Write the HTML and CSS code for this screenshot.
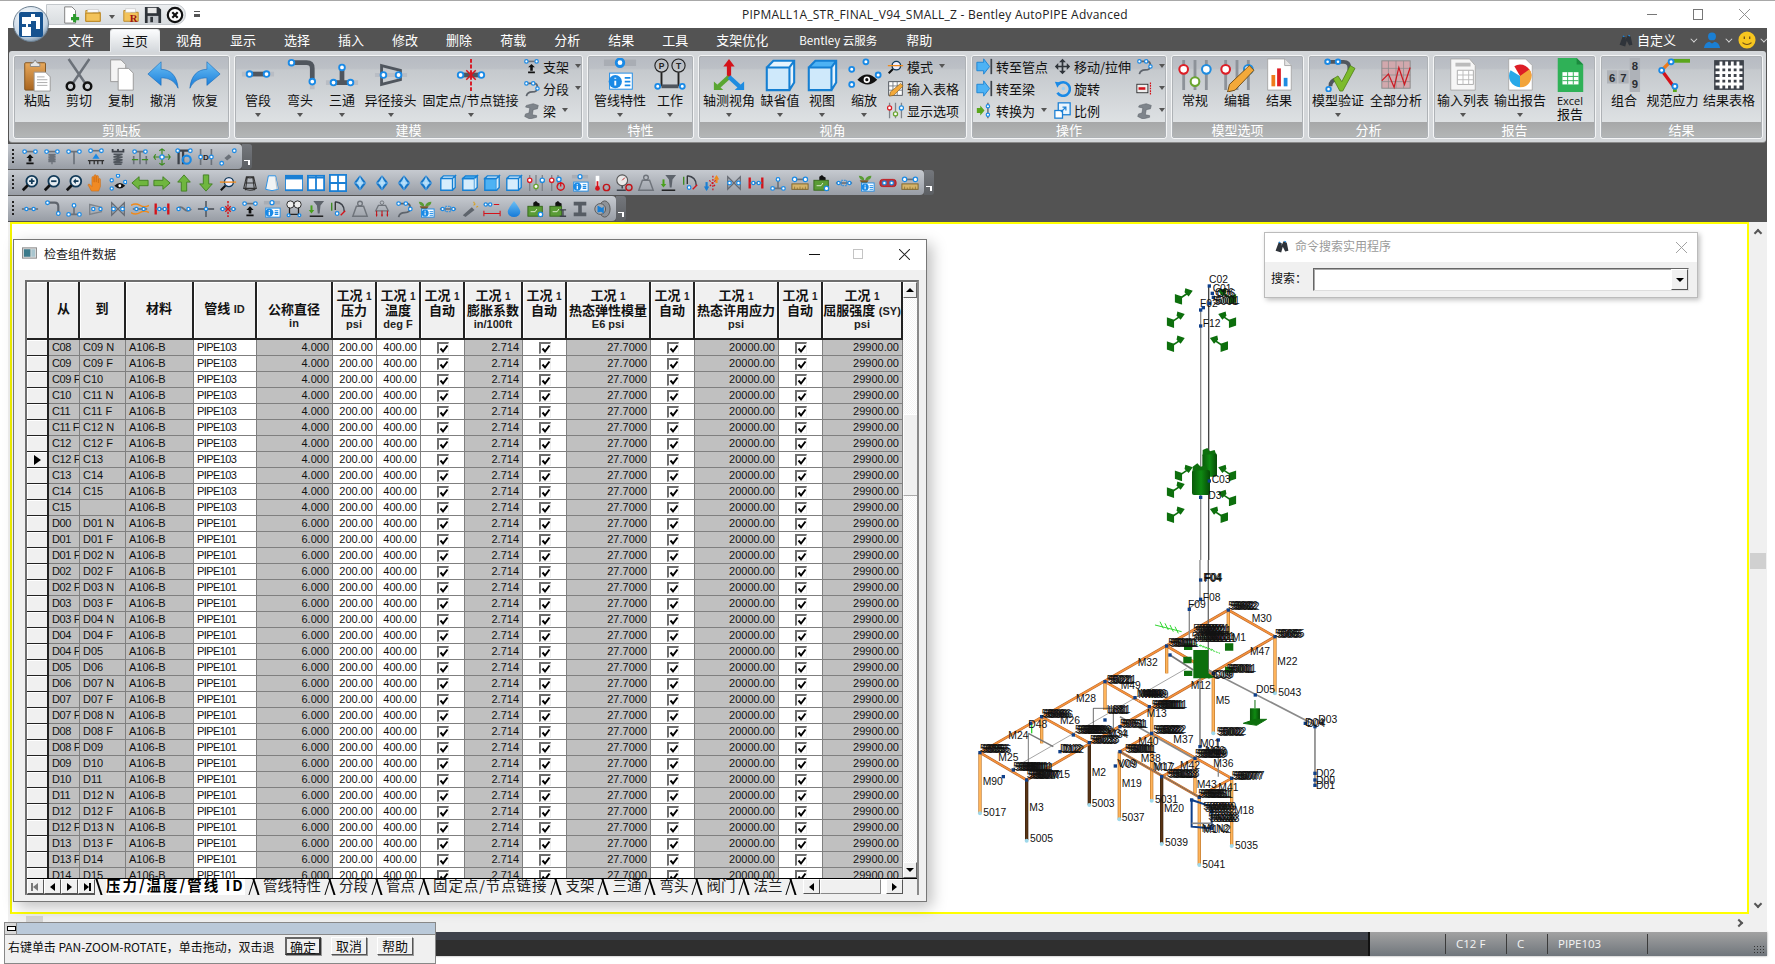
FILE: index.html
```html
<!DOCTYPE html>
<html lang="zh-CN">
<head>
<meta charset="utf-8">
<title>PIPMALL1A_STR_FINAL_V94_SMALL_Z - Bentley AutoPIPE Advanced</title>
<link rel="stylesheet" href="styles.css">
</head>
<body>
<svg class="defs" aria-hidden="true">
<defs>
<linearGradient id="gOrange" x1="0" x2="0" y1="0" y2="1"><stop offset="0" stop-color="#e8a95c"/><stop offset="1" stop-color="#a8641f"/></linearGradient>
<linearGradient id="gBlue" x1="0" x2="0" y1="0" y2="1"><stop offset="0" stop-color="#6cc0f5"/><stop offset="1" stop-color="#1479d8"/></linearGradient>
<linearGradient id="gCyl" x1="0" x2="1" y1="0" y2="0"><stop offset="0" stop-color="#0a5a0a"/><stop offset=".5" stop-color="#0f8a12"/><stop offset="1" stop-color="#064a06"/></linearGradient>
<radialGradient id="gApp" cx=".4" cy=".3" r=".8"><stop offset="0" stop-color="#fff"/><stop offset=".7" stop-color="#c3d4e4"/><stop offset="1" stop-color="#5d7890"/></radialGradient>
</defs>
<!-- ribbon, 36 units -->
<symbol id="paste" viewBox="0 0 36 36"><rect x="5" y="5" width="22" height="29" rx="1" fill="url(#gOrange)" stroke="#7d5220"/><path d="M11 6l3-1 2-3 2 3 3 1v3H11z" fill="#e6e6e6" stroke="#888"/><path d="M15 15h12l5 5v15H15z" fill="#fff" stroke="#999"/><path d="M18 20h8M18 23h11M18 26h11M18 29h11" stroke="#aaa"/></symbol>
<symbol id="cut" viewBox="0 0 36 36"><path d="M7 1l17 25M29 1L12 26" stroke="#6b7179" stroke-width="2.6" fill="none"/><circle cx="9" cy="30" r="4" fill="none" stroke="#111" stroke-width="2.6"/><circle cx="27" cy="30" r="4" fill="none" stroke="#111" stroke-width="2.6"/></symbol>
<symbol id="copy" viewBox="0 0 36 36"><path d="M7 2h11l5 5v18H7z" fill="#f4f4f4" stroke="#999"/><path d="M15 11h11l5 5v18H15z" fill="#fff" stroke="#999"/></symbol>
<symbol id="undo" viewBox="0 0 36 36"><path d="M2 17L16 4v8c10 0 17 7 18 20-4-8-10-11-18-11v8z" fill="url(#gBlue)" stroke="#1167b8" stroke-width=".6"/></symbol>
<symbol id="redo" viewBox="0 0 36 36"><path d="M34 17L20 4v8C10 12 3 19 2 32c4-8 10-11 18-11v8z" fill="url(#gBlue)" stroke="#1167b8" stroke-width=".6"/></symbol>
<symbol id="lpipe" viewBox="0 0 36 36"><path d="M1 17h34" stroke="#b9bdc4" stroke-width="5"/><path d="M9 17h18" stroke="#50565e" stroke-width="5"/><circle class="nl" cx="9" cy="17" r="3"/><circle class="nl" cx="27" cy="17" r="3"/></symbol>
<symbol id="lbend" viewBox="0 0 36 36"><path d="M2 5h6M31 24v9" stroke="#b9bdc4" stroke-width="5"/><path d="M8 5h17q6 0 6 6v14" stroke="#50565e" stroke-width="5" fill="none"/><circle class="nl" cx="9" cy="5" r="3"/><circle class="nl" cx="31" cy="25" r="3"/></symbol>
<symbol id="ltee" viewBox="0 0 36 36"><path d="M1 26h34M18 2v10" stroke="#b9bdc4" stroke-width="5"/><path d="M8 26h20M18 10v16" stroke="#50565e" stroke-width="5"/><circle class="nl" cx="18" cy="10" r="3"/><circle class="nl" cx="9" cy="26" r="3"/><circle class="nl" cx="27" cy="26" r="3"/></symbol>
<symbol id="lred" viewBox="0 0 36 36"><path d="M1 18h34" stroke="#b9bdc4" stroke-width="4"/><path d="M8 8l20 5v10L8 28z" fill="none" stroke="#50565e" stroke-width="3"/><circle class="nl" cx="10" cy="18" r="3"/><circle class="nl" cx="26" cy="18" r="3"/></symbol>
<symbol id="lanch" viewBox="0 0 36 36"><path d="M6 18h24" stroke="#50565e" stroke-width="5"/><path d="M18 1v34" stroke="#d8141e" stroke-width="2" stroke-dasharray="4 2"/><path d="M13 13l10 10M23 13L13 23" stroke="#d8141e" stroke-width="1.6"/><circle class="nl" cx="7" cy="18" r="3"/><circle class="nl" cx="29" cy="18" r="3"/></symbol>
<symbol id="lprop" viewBox="0 0 36 36"><path d="M1 5h34" stroke="#a9adb4" stroke-width="7"/><circle cx="18" cy="5" r="4" fill="#fff" stroke="#1a8ae6" stroke-width="3"/><rect x="7" y="16" width="24" height="17" fill="#fff" stroke="#1a8ae6"/><circle cx="13" cy="25" r="7" fill="#1a8ae6"/><path d="M13 21v1M13 24v5" stroke="#fff" stroke-width="2"/><path d="M23 21h6M23 25h6M23 29h6" stroke="#1a8ae6" stroke-width="2"/></symbol>
<symbol id="lpt" viewBox="0 0 36 36"><path d="M9 15v15M27 15v15" stroke="#222" stroke-width="2"/><path d="M9 30h18" stroke="#50565e" stroke-width="4"/><circle cx="9" cy="8" r="7" fill="none" stroke="#222" stroke-width="1.2"/><circle cx="27" cy="8" r="7" fill="none" stroke="#222" stroke-width="1.2"/><text x="9" y="12" class="svt" text-anchor="middle">P</text><text x="27" y="12" class="svt" text-anchor="middle">T</text><circle class="nl" cx="5" cy="30" r="2.6"/><circle class="nl" cx="31" cy="30" r="2.6"/></symbol>
<symbol id="laxes" viewBox="0 0 36 36"><path d="M18 20V7" stroke="#d4121a" stroke-width="4.5"/><path d="M12 9l6-8 6 8z" fill="#d4121a"/><path d="M18 20L7 30" stroke="#5aa632" stroke-width="4.5"/><path d="M2 25v9h10z" fill="#5aa632"/><path d="M18 20l11 10" stroke="#1f8ce0" stroke-width="4.5"/><path d="M34 25v9H24z" fill="#1f8ce0"/></symbol>
<symbol id="lcube" viewBox="0 0 36 36"><path d="M4 10h24v24H4z" fill="#cfe9fb"/><path d="M4 10l7-7h22l-5 7z" fill="#e7f4fd"/><path d="M28 10l5-7v23l-5 8z" fill="#e7f4fd"/><path d="M4 10h24v24H4zM4 10l7-7h22v23l-5 8M28 10l5-7" fill="none" stroke="#157fd2" stroke-width="2.2"/></symbol>
<symbol id="lcubeb" viewBox="0 0 36 36"><path d="M4 10h24v24H4z" fill="#cfe9fb"/><path d="M4 10l7-7h22l-5 7z" fill="#4db2f4"/><path d="M28 10l5-7v23l-5 8z" fill="#e7f4fd"/><path d="M4 10h24v24H4zM4 10l7-7h22v23l-5 8M28 10l5-7" fill="none" stroke="#157fd2" stroke-width="2.2"/></symbol>
<symbol id="leye" viewBox="0 0 36 36"><circle class="nl" cx="5" cy="12" r="2.6"/><circle class="nl" cx="20" cy="4" r="2.6"/><circle class="nl" cx="5" cy="28" r="2.6"/><circle class="nl" cx="33" cy="18" r="2.6"/><path d="M11 23q10-11 21 0-10 10-21 0z" fill="#111"/><circle cx="21" cy="23" r="3.4" fill="#fff"/><circle cx="21" cy="23" r="1.7" fill="#111"/></symbol>
<symbol id="lslid" viewBox="0 0 36 36"><path d="M6 2v32M18 2v32M30 2v32" stroke="#8d9299" stroke-width="3"/><circle cx="6" cy="12" r="4.6" fill="#fff" stroke="#dd1e26" stroke-width="2.2"/><circle cx="18" cy="25" r="4.6" fill="#fff" stroke="#6aa52f" stroke-width="2.2"/><circle cx="30" cy="12" r="4.6" fill="#fff" stroke="#1f8ce0" stroke-width="2.2"/></symbol>
<symbol id="ledit" viewBox="0 0 36 36"><path d="M6 2v32M18 2v32M30 2v32" stroke="#8d9299" stroke-width="3"/><circle cx="6" cy="12" r="4.6" fill="#fff" stroke="#dd1e26" stroke-width="2.2"/><circle cx="30" cy="12" r="4.6" fill="#fff" stroke="#1f8ce0" stroke-width="2.2"/><path d="M31 8l5 5-20 21-8 2 2-8z" fill="#f3a93a" stroke="#6b4a16"/></symbol>
<symbol id="ldocb" viewBox="0 0 36 36"><path d="M6 1h18l7 7v26H6z" fill="#fff" stroke="#a8a8a8"/><path d="M24 1v7h7" fill="#e4e4e4" stroke="#a8a8a8"/><path d="M10 18h4v12h-4z" fill="#ef7b1c"/><path d="M16 11h4v19h-4z" fill="#dd1e26"/><path d="M23 21h4v9h-4z" fill="#1f8ce0"/></symbol>
<symbol id="lverify" viewBox="0 0 36 36"><path d="M4 4h20q6 0 6 6v3M10 30q0-7 7-7" stroke="#50565e" stroke-width="4" fill="none"/><circle class="nl" cx="7" cy="4" r="2.4"/><circle class="nl" cx="18" cy="4" r="2.4"/><circle class="nl" cx="8" cy="33" r="2.4"/><path d="M13 22l5-3 4 6 9-17 5 3-13 24h-3z" fill="#7dbb2c" stroke="#4a7c12" stroke-width=".8"/></symbol>
<symbol id="lchart" viewBox="0 0 36 36"><rect x="3" y="3" width="30" height="29" fill="#d2a8ad" stroke="#8b8b8b"/><path d="M3 11h30M3 18h30M3 25h30M10 3v29M18 3v29M26 3v29" stroke="#8b8b8b" stroke-width=".8"/><path d="M3 24l7-7 6 14 5-21 6 18 6-18" fill="none" stroke="#cb1a22" stroke-width="1.3"/></symbol>
<symbol id="ldoct" viewBox="0 0 36 36"><path d="M5 1h20l6 7v26H5z" fill="#f6f6f6" stroke="#aaa"/><path d="M10 5h16v4H10z" fill="#bbb"/><path d="M12 13h17v15H12z" fill="#fff" stroke="#aaa"/><path d="M12 18h17M12 23h17M18 13v15M24 13v15" stroke="#bbb"/></symbol>
<symbol id="ldocp" viewBox="0 0 36 36"><path d="M6 1h18l7 7v26H6z" fill="#fff" stroke="#aaa"/><path d="M18 19V7a12 12 0 0 1 10.600 17.700z" fill="#dd1e26" transform="rotate(-30 18 19)"/><path d="M18 19l10-7a12 12 0 0 1-10 19z" fill="#f2a43a"/><path d="M18 19v12a12 12 0 0 1-10-18z" fill="#28a8e8"/></symbol>
<symbol id="lxl" viewBox="0 0 36 36"><path d="M5 0h20l7 7v29H5z" fill="#2fb157"/><path d="M25 0v7h7z" fill="#1b8a3e"/><path d="M10 15h17v13H10z" fill="#fff"/><path d="M10 19.500h17M10 24h17M15.500 15v13M21.500 15v13" stroke="#2fb157"/></symbol>
<symbol id="lcombo" viewBox="0 0 36 36"><path d="M0 13h11v14H0zM12 13h11v14H12zM24 0h11v18H24zM24 18h11v18H24z" fill="#aeb2b8"/><text x="5.500" y="25" class="sn" text-anchor="middle">6</text><text x="17.500" y="25" class="sn" text-anchor="middle">7</text><text x="29.500" y="13" class="sn" text-anchor="middle">8</text><text x="29.500" y="32" class="sn" text-anchor="middle">9</text></symbol>
<symbol id="lcode" viewBox="0 0 36 36"><path d="M16 3h20" stroke="#5aa61c" stroke-width="4"/><path d="M6 13L16 3" stroke="#ef7b1c" stroke-width="3.5"/><path d="M6 13l14 19" stroke="#d4121a" stroke-width="3.5"/><path d="M20 30v6" stroke="#5aa61c" stroke-width="4"/><circle class="nl" cx="6" cy="13" r="2.6"/><circle class="nl" cx="16" cy="4" r="2.6"/><circle class="nl" cx="20" cy="30" r="2.6"/></symbol>
<symbol id="lgrid" viewBox="0 0 36 36"><rect x="3" y="3" width="30" height="30" fill="#3d424a"/><path d="M9.500 3v30M15.500 3v30M21.500 3v30M27.500 3v30M3 9.500h30M3 15.500h30M3 21.500h30M3 27.500h30" stroke="#fff" stroke-width="3"/><rect x="3" y="3" width="30" height="30" fill="none" stroke="#3d424a" stroke-width="1.500"/></symbol>
<!-- small, 20 units -->
<symbol id="hang" viewBox="0 0 20 20"><path class="g" d="M4 4h12"/><circle class="nd" cx="4" cy="4" r="2"/><circle class="nd" cx="16" cy="4" r="2"/><path fill="#111" d="M10 7l4 4h-2.500v4h-3v-4H6zM6 16h8v2H6z"/></symbol>
<symbol id="spring" viewBox="0 0 20 20"><path class="g" d="M4 4h12"/><circle class="nd" cx="4" cy="4" r="2"/><circle class="nd" cx="16" cy="4" r="2"/><path fill="none" stroke="#6b7179" stroke-width="1.500" d="M6 7h8l-8 2h8l-8 2h8l-8 2h8l-8 2h8M10 15v3"/></symbol>
<symbol id="rod" viewBox="0 0 20 20"><path class="g" d="M4 4h12M10 5v13"/><circle class="nd" cx="4" cy="4" r="2"/><circle class="nd" cx="16" cy="4" r="2"/></symbol>
<symbol id="tri" viewBox="0 0 20 20"><path class="g" d="M4 3h12"/><circle class="nd" cx="4" cy="3" r="2"/><circle class="nd" cx="16" cy="3" r="2"/><path fill="#1a8ae6" d="M10 6l4 6H6z"/><path stroke="#333" stroke-width="1.500" fill="none" d="M1 14h18M3 14v4M8 14v4M12 14v4M17 14v4"/></symbol>
<symbol id="comb" viewBox="0 0 20 20"><path stroke="#3d424a" stroke-width="2" fill="none" d="M3 4h14M4 1v3M10 1v3M16 1v3"/><path stroke="#4f555c" stroke-width="1.800" fill="none" d="M5 7h10L5 10h10L5 13h10L5 16h10M6 18h8"/></symbol>
<symbol id="gt" viewBox="0 0 20 20"><path class="g" d="M4 4h12M10 4v14M3 9v9M17 9v9"/><circle class="nd" cx="4" cy="4" r="2"/><circle class="nd" cx="16" cy="4" r="2"/><path stroke="#3c8a1e" stroke-width="1.400" d="M1 13h7M12 13h7"/></symbol>
<symbol id="gx" viewBox="0 0 20 20"><path stroke="#3c8a1e" stroke-width="1.300" d="M10 1v18M1 10h18M7 3l3-2 3 2M7 17l3 2 3-2M3 7l-2 3 2 3M17 7l2 3-2 3" fill="none"/><circle class="nd" cx="10" cy="10" r="2.400"/></symbol>
<symbol id="pcurve" viewBox="0 0 20 20"><path stroke="#3d424a" stroke-width="2.500" fill="none" d="M3 3h14M4 3v15M9 3v15"/><circle cx="13" cy="13" r="4.500" fill="none" stroke="#1a8ae6" stroke-width="2.400"/><circle class="nd" cx="3" cy="3" r="2"/><circle class="nd" cx="17" cy="3" r="2"/></symbol>
<symbol id="dd" viewBox="0 0 20 20"><path class="g" d="M4 1v18M16 1v18"/><circle class="nd" cx="4" cy="10" r="2"/><circle class="nd" cx="16" cy="10" r="2"/><text x="10" y="13" class="svt" text-anchor="middle">D</text></symbol>
<symbol id="diag" viewBox="0 0 20 20"><circle class="nd" cx="3" cy="17" r="2"/><circle class="nd" cx="17" cy="3" r="2"/><path d="M6 11l5-4 3 3-5 4z" fill="#6b7179"/></symbol>
<symbol id="zin" viewBox="0 0 20 20"><circle cx="12" cy="8" r="6" fill="#e6edf2" stroke="#123a58" stroke-width="2"/><path d="M7.500 12.500L2 18" stroke="#111" stroke-width="3"/><path d="M9 8h6M12 5v6" stroke="#123a58" stroke-width="2"/></symbol>
<symbol id="zout" viewBox="0 0 20 20"><circle cx="12" cy="8" r="6" fill="#e6edf2" stroke="#123a58" stroke-width="2"/><path d="M7.500 12.500L2 18" stroke="#111" stroke-width="3"/><path d="M9 8h6" stroke="#123a58" stroke-width="2"/></symbol>
<symbol id="zprev" viewBox="0 0 20 20"><circle cx="12" cy="8" r="6" fill="#e6edf2" stroke="#123a58" stroke-width="2"/><path d="M7.500 12.500L2 18" stroke="#111" stroke-width="3"/><path d="M9 8l3-3v2h3v2h-3v2z" fill="#123a58"/></symbol>
<symbol id="hand" viewBox="0 0 20 20"><path fill="#f08a24" stroke="#c96a12" stroke-width=".6" d="M5 19l-4-7 1.500-1 3 3V4a1.200 1.200 0 0 1 2.400 0v5V2a1.200 1.200 0 0 1 2.400 0v7V3a1.200 1.200 0 0 1 2.400 0v7V6a1.100 1.100 0 0 1 2.200 0v8l-2 5z"/></symbol>
<symbol id="eye" viewBox="0 0 20 20"><circle class="nd" cx="3" cy="7" r="1.800"/><circle class="nd" cx="10" cy="2" r="1.800"/><circle class="nd" cx="3" cy="16" r="1.800"/><circle class="nd" cx="18" cy="9" r="1.800"/><path d="M6 13q6-6 12 0-6 6-12 0z" fill="#111"/><circle cx="12" cy="13" r="1.600" fill="#fff"/></symbol>
<symbol id="al" viewBox="0 0 20 20"><path class="ar" d="M1 10l8-7v4h10v6H9v4z"/></symbol>
<symbol id="ar" viewBox="0 0 20 20"><path class="ar" d="M19 10l-8-7v4H1v6h10v4z"/></symbol>
<symbol id="au" viewBox="0 0 20 20"><path class="ar" d="M10 1l7 8h-4v10H7V9H3z"/></symbol>
<symbol id="ad" viewBox="0 0 20 20"><path class="ar" d="M10 19l7-8h-4V1H7v10H3z"/></symbol>
<symbol id="lens" viewBox="0 0 20 20"><circle cx="11" cy="9" r="5" fill="#eef" stroke="#123a58" stroke-width="1.600"/><path d="M7 13l-5 5" stroke="#111" stroke-width="2.400"/><path d="M1 9h18" stroke="#ef8a1c" stroke-width="1.500"/></symbol>
<symbol id="wire" viewBox="0 0 20 20"><path fill="none" stroke="#333" stroke-width="1.200" d="M6 3h8l3 13H3zM6 3q4 3 8 0M3 16q7 4 14 0M7 3L5 18M13 3l2 15M4 10h12"/></symbol>
<symbol id="cone" viewBox="0 0 20 20"><path d="M6 2h8l3 15q-7 3-14 0z" fill="#f1f3f4" stroke="#1a8ae6" stroke-width="1"/><path d="M13 3l2 14 2 0-3-14z" fill="#c2c6cb"/></symbol>
<symbol id="w1" viewBox="0 0 20 20"><rect x="0" y="2" width="20" height="16" fill="#fff" stroke="#1a7fd4" stroke-width="2"/><rect x="0" y="2" width="20" height="4" fill="#1a7fd4"/></symbol>
<symbol id="w2" viewBox="0 0 20 20"><rect x="1" y="2" width="18" height="16" fill="#fff" stroke="#1a7fd4" stroke-width="2"/><path d="M1 4h18M10 2v16" stroke="#1a7fd4" stroke-width="2"/></symbol>
<symbol id="w4" viewBox="0 0 20 20"><rect x="1" y="1" width="18" height="18" fill="#fff" stroke="#1a7fd4" stroke-width="2"/><path d="M1 10h18M10 1v18" stroke="#1a7fd4" stroke-width="2"/></symbol>
<symbol id="gem" viewBox="0 0 20 20"><path d="M10 1l7 9-7 9-7-9z" fill="#1576c8"/><path d="M10 4l4 6-4 5-4-5z" fill="#9ed4f8"/><path d="M10 1v18M3 10h14" stroke="#e8f5ff" stroke-width=".5"/></symbol>
<symbol id="c1" viewBox="0 0 20 20"><path d="M2 5h13v13H2zM2 5l3-3h13l-3 3M15 5l3-3v13l-3 3" fill="#d6edfc" stroke="#157fd2" stroke-width="1.500"/></symbol>
<symbol id="c2" viewBox="0 0 20 20"><path d="M2 5h13v13H2z" fill="#d6edfc" stroke="#157fd2" stroke-width="1.500"/><path d="M2 5l3-3h13l-3 3z" fill="#4db2f4" stroke="#157fd2" stroke-width="1.500"/><path d="M15 5l3-3v13l-3 3" fill="#d6edfc" stroke="#157fd2" stroke-width="1.500"/></symbol>
<symbol id="c3" viewBox="0 0 20 20"><path d="M2 5h13v13H2z" fill="#4db2f4" stroke="#157fd2" stroke-width="1.500"/><path d="M2 5l3-3h13l-3 3zM15 5l3-3v13l-3 3" fill="#d6edfc" stroke="#157fd2" stroke-width="1.500"/></symbol>
<symbol id="slid" viewBox="0 0 20 20"><path d="M3 1v18M10 1v18M17 1v18" stroke="#7f848b" stroke-width="1.500"/><circle cx="3" cy="7" r="2.400" fill="#fff" stroke="#dd1e26" stroke-width="1.500"/><circle cx="10" cy="14" r="2.400" fill="#fff" stroke="#6aa52f" stroke-width="1.500"/><circle cx="17" cy="7" r="2.400" fill="#fff" stroke="#1f8ce0" stroke-width="1.500"/></symbol>
<symbol id="slidp" viewBox="0 0 20 20"><path d="M3 1v18M10 1v12" stroke="#7f848b" stroke-width="1.500"/><circle cx="3" cy="7" r="2.400" fill="#fff" stroke="#dd1e26" stroke-width="1.500"/><circle cx="11" cy="6" r="2.400" fill="#fff" stroke="#1f8ce0" stroke-width="1.500"/><circle cx="13" cy="14" r="4" fill="none" stroke="#d4121a" stroke-width="1.500"/><path d="M13 9v5" stroke="#d4121a" stroke-width="1.500"/></symbol>
<symbol id="info" viewBox="0 0 20 20"><path d="M1 3h18" stroke="#a9adb4" stroke-width="4"/><circle class="nd" cx="10" cy="3" r="2.200"/><rect x="3" y="9" width="16" height="10" fill="#fff" stroke="#1a8ae6"/><circle cx="7" cy="14" r="4.600" fill="#1a8ae6"/><path d="M7 11v1M7 13v4" stroke="#fff" stroke-width="1.400"/><path d="M13 12h4M13 14h4M13 16h4" stroke="#1a8ae6" stroke-width="1.200"/></symbol>
<symbol id="therm" viewBox="0 0 20 20"><path d="M5 2v11" stroke="#fff" stroke-width="4"/><path d="M5 8v8" stroke="#d4121a" stroke-width="2"/><circle cx="5" cy="16" r="2.600" fill="#d4121a"/><circle cx="15" cy="15" r="3.500" fill="none" stroke="#c21419" stroke-width="1.600"/></symbol>
<symbol id="gauge" viewBox="0 0 20 20"><circle cx="8" cy="7" r="6" fill="#e8e8e8" stroke="#555" stroke-width="1.200"/><path d="M8 7l3-3" stroke="#c21419"/><path d="M8 13v3M2 18h10" stroke="#3d424a" stroke-width="1.600"/><circle cx="15.500" cy="15" r="3.400" fill="none" stroke="#c21419" stroke-width="1.600"/></symbol>
<symbol id="wt" viewBox="0 0 20 20"><path d="M6 7h8l4 11H2z" fill="none" stroke="#6f747b" stroke-width="1.600"/><circle cx="10" cy="4" r="2.600" fill="none" stroke="#6f747b" stroke-width="1.500"/></symbol>
<symbol id="wta" viewBox="0 0 20 20"><path d="M6 6h8l3 6H3z" fill="none" stroke="#6f747b" stroke-width="1.400"/><circle cx="10" cy="3" r="2" fill="none" stroke="#6f747b"/><path d="M4 12v6M10 12v6M16 12v6" stroke="#c21419" stroke-width="1.200"/><path d="M3 16l1 3 1-3M9 16l1 3 1-3M15 16l1 3 1-3" fill="#c21419"/></symbol>
<symbol id="force" viewBox="0 0 20 20"><path d="M7 1h12l-4 5-1 9h-2l-1-9z" fill="#5e646c"/><path d="M5 6v7" stroke="#49a01c" stroke-width="2.200"/><path d="M2 11h6l-3 4z" fill="#49a01c"/><path d="M3 18h15" stroke="#111" stroke-width="1.500"/></symbol>
<symbol id="dial" viewBox="0 0 20 20"><path d="M7 2q10 1 10 11" fill="none" stroke="#3d424a" stroke-width="1.600"/><path d="M3 3v9" stroke="#3c8a1e" stroke-width="1.500"/><path d="M7 2v9" stroke="#333" stroke-width="1.500"/><circle class="nd" cx="9" cy="15" r="2"/><path d="M13 17l5-5" stroke="#d4121a" stroke-width="1.500"/></symbol>
<symbol id="rb" viewBox="0 0 20 20"><path d="M4 9v8" stroke="#1a7fd4" stroke-width="2.400"/><path d="M1 14h6l-3 5z" fill="#1a7fd4"/><path d="M15 3v7" stroke="#ef8a1c" stroke-width="2.400"/><path d="M12 6h6l-3-5z" fill="#ef8a1c"/><path d="M11 2v17M7 7l7 7M14 7l-7 7" stroke="#d4121a" stroke-dasharray="2 1.500" stroke-width="1.300"/></symbol>
<symbol id="valve" viewBox="0 0 20 20"><path d="M3 3l14 14V3L3 17z" fill="none" stroke="#666b73" stroke-width="1.400"/><circle class="nd" cx="5" cy="10" r="2"/><circle class="nd" cx="15" cy="10" r="2"/></symbol>
<symbol id="fl" viewBox="0 0 20 20"><path d="M3 4v12M17 4v12" stroke="#d4121a" stroke-width="2.600"/><path class="g" d="M3 10h14" stroke-width="1.400"/><circle class="nd" cx="7" cy="10" r="1.800"/><circle class="nd" cx="13" cy="10" r="1.800"/></symbol>
<symbol id="tee" viewBox="0 0 20 20"><path class="g" d="M10 4v12M3 16h14"/><circle class="nd" cx="10" cy="6" r="2"/><circle class="nd" cx="4" cy="16" r="2"/><circle class="nd" cx="16" cy="16" r="2"/></symbol>
<symbol id="rule" viewBox="0 0 20 20"><path class="g" d="M4 6h12"/><circle class="nd" cx="4" cy="6" r="2.400"/><circle class="nd" cx="16" cy="6" r="2.400"/><rect x="1" y="11" width="18" height="6" fill="#d4b36a" stroke="#7b6226"/><path d="M4 14v3M7 15v2M10 14v3M13 15v2M16 14v3" stroke="#7b6226" stroke-width=".7"/></symbol>
<symbol id="mach" viewBox="0 0 20 20"><path d="M7 7V3l3-2 2 2 2 1v3z" fill="#111"/><rect x="1" y="7" width="16" height="11" fill="#5a9c35" stroke="#34661a"/><path d="M4 13h5l2-3" stroke="#e5f2d8" fill="none"/><circle class="nd" cx="15" cy="16" r="2.400"/></symbol>
<symbol id="mach2" viewBox="0 0 20 20"><path d="M7 7V3l3-2 2 2 2 1v3z" fill="#111"/><rect x="1" y="7" width="13" height="11" fill="#5a9c35" stroke="#34661a"/><path d="M4 13h5l2-3" stroke="#e5f2d8" fill="none"/><path d="M12 11h7M12 18h7M15.500 11v7" stroke="#3d424a" stroke-width="1.500"/></symbol>
<symbol id="joint" viewBox="0 0 20 20"><path class="g" d="M1 10h18" stroke-width="1.200"/><rect x="7" y="7" width="6" height="6" fill="none" stroke="#1a8ae6" stroke-dasharray="2 1"/><circle class="nd" cx="4" cy="10" r="1.800"/><circle class="nd" cx="16" cy="10" r="1.800"/></symbol>
<symbol id="plant" viewBox="0 0 20 20"><path d="M8 7q-5 0-6-5 6 0 6 5zM9 7q1-5 7-5 0 5-7 5z" fill="#5a9c35"/><path d="M3 7h10l-2 3H5z" fill="#7a5a2a"/><rect x="5" y="10" width="14" height="9" fill="#fff" stroke="#1a8ae6"/><circle cx="9" cy="14.500" r="4" fill="#1a8ae6"/><path d="M9 12v1M9 14v3" stroke="#fff" stroke-width="1.200"/><path d="M14 13h4M14 15h4M14 17h4" stroke="#1a8ae6"/></symbol>
<symbol id="chain" viewBox="0 0 20 20"><rect x="1" y="6" width="18" height="8" rx="3" fill="#a83a48" stroke="#c21419"/><circle class="nd" cx="6" cy="10" r="2"/><circle class="nd" cx="14" cy="10" r="2"/></symbol>
<symbol id="pipe" viewBox="0 0 20 20"><path class="g" d="M1 10h18" stroke="#9aa0a7" stroke-width="2"/><circle class="nd" cx="6" cy="10" r="1.800"/><circle class="nd" cx="14" cy="10" r="1.800"/></symbol>
<symbol id="bend" viewBox="0 0 20 20"><path d="M3 3h10q4 0 4 4v10" stroke="#5e646c" stroke-width="2.400" fill="none"/><circle class="nd" cx="5" cy="3" r="2"/><circle class="nd" cx="17" cy="15" r="2"/></symbol>
<symbol id="redu" viewBox="0 0 20 20"><path d="M3 5l13 3v5L3 16z" fill="none" stroke="#7d838a" stroke-width="1.500"/><circle class="nd" cx="7" cy="10" r="1.800"/><circle class="nd" cx="15" cy="10" r="1.800"/></symbol>
<symbol id="flex" viewBox="0 0 20 20"><path d="M0 6q5-3 10 0t10 0M0 14q5 3 10 0t10 0" fill="none" stroke="#ef8a1c" stroke-width="1.500"/><path class="g" d="M2 10h16" stroke-width="1.500"/><circle class="nd" cx="6" cy="10" r="1.800"/><circle class="nd" cx="14" cy="10" r="1.800"/></symbol>
<symbol id="wave" viewBox="0 0 20 20"><path d="M2 10q4-4 8 0t8 0" fill="none" stroke="#6b7179" stroke-width="2"/><circle class="nd" cx="4" cy="10" r="1.800"/><circle class="nd" cx="15" cy="10" r="1.800"/></symbol>
<symbol id="cross" viewBox="0 0 20 20"><path d="M1 10h18M10 1v18" stroke="#5e646c" stroke-width="2"/><circle class="nd" cx="10" cy="10" r="1.800"/></symbol>
<symbol id="anch" viewBox="0 0 20 20"><path class="g" d="M1 10h18" stroke-width="1.200"/><path d="M10 1v18" stroke="#d4121a" stroke-width="1.600" stroke-dasharray="2.500 1.500"/><path d="M7 7l6 6M13 7l-6 6" stroke="#d4121a" stroke-width="1.400"/><circle class="nd" cx="4" cy="10" r="1.800"/><circle class="nd" cx="16" cy="10" r="1.800"/></symbol>
<symbol id="pt" viewBox="0 0 20 20"><path d="M5 8v8M15 8v8M5 16h10" stroke="#222" stroke-width="1.400"/><circle cx="6" cy="5" r="4" fill="#eee" stroke="#222"/><circle cx="14" cy="5" r="4" fill="#eee" stroke="#222"/><circle class="nd" cx="4" cy="17" r="1.600"/><circle class="nd" cx="16" cy="17" r="1.600"/></symbol>
<symbol id="curve" viewBox="0 0 20 20"><path d="M3 4h10q4 0 4 5t-6 5q-6 0-7 5" fill="none" stroke="#5e646c" stroke-width="2"/><circle class="nd" cx="4" cy="4" r="2"/><circle class="nd" cx="12" cy="4" r="2"/><circle class="nd" cx="17" cy="10" r="2"/></symbol>
<symbol id="torch" viewBox="0 0 20 20"><path d="M2 17L12 8l3 3-10 8z" fill="#5e646c"/><path d="M14 6l2-2M17 8l2-1M14 2l1 2" stroke="#d8a020" stroke-width="1.200"/></symbol>
<symbol id="dist" viewBox="0 0 20 20"><path class="g" d="M1 5h9" stroke-width="1.200"/><circle class="nd" cx="3" cy="5" r="1.800"/><circle class="nd" cx="8" cy="5" r="1.800"/><path d="M12 5h6M1 15h18M1 12v6M19 12v6" stroke="#d4121a" stroke-width="1.200"/></symbol>
<symbol id="drop" viewBox="0 0 20 20"><path d="M10 1q7 9 7 12a7 6 0 0 1-14 0q0-3 7-12z" fill="url(#gBlue)"/></symbol>
<symbol id="ibeam" viewBox="0 0 20 20"><path d="M3 2h14v4h-5v8h5v4H3v-4h5V6H3z" fill="#565c64"/></symbol>
<symbol id="spk" viewBox="0 0 20 20"><ellipse cx="13" cy="10" rx="6" ry="9" fill="#8e9298" stroke="#555"/><circle cx="8" cy="10" r="6" fill="#a6aab0" stroke="#555"/><path d="M5 6l5 3 2-2v8l-3-2-4 1z" fill="#1a7fd4"/></symbol>
<symbol id="gonode" viewBox="0 0 20 20"><path d="M1 5h8V1l7 9-7 9v-4H1z" fill="#4db2f4" stroke="#157fd2"/><path d="M18 1v18" stroke="#3d424a" stroke-width="2"/></symbol>
<symbol id="move" viewBox="0 0 20 20"><path fill="#2f343a" d="M10 1l4 4h-3v4h4V6l4 4-4 4v-3h-4v4h3l-4 4-4-4h3v-4H5v3l-4-4 4-4v3h4V5H6z"/></symbol>
<symbol id="rot" viewBox="0 0 20 20"><path d="M5 5a8 8 0 1 1-1 10" fill="none" stroke="#1a8ae6" stroke-width="3"/><path d="M1 2l7 1-4 6z" fill="#1a8ae6"/><circle cx="11" cy="10" r="2" fill="#9bd1f5"/></symbol>
<symbol id="scale" viewBox="0 0 20 20"><rect x="5" y="1" width="14" height="14" fill="#eaf5fd" stroke="#1a7fd4" stroke-width="1.500"/><rect x="1" y="10" width="9" height="9" fill="#fff" stroke="#1a7fd4" stroke-width="1.500"/><path d="M8 12l6-6M10 6h4v4" stroke="#1a7fd4" stroke-width="1.400" fill="none"/></symbol>
<symbol id="conv" viewBox="0 0 20 20"><path d="M1 7h4V4l5 6-5 6v-3H1z" fill="#5aa61c"/><path class="g" d="M14 1v18" stroke-width="1.600"/><circle class="nd" cx="14" cy="5" r="2"/><circle class="nd" cx="14" cy="15" r="2"/></symbol>
<symbol id="tedit" viewBox="0 0 20 20"><rect x="2" y="2" width="16" height="16" fill="#fff" stroke="#3d424a"/><path d="M2 7h16M2 12h16M7 2v16M12 2v16" stroke="#6b7179"/><path d="M16 4l3 3-11 11-5 1 1-5z" fill="#f3a93a" stroke="#7b5416" stroke-width=".7"/></symbol>
<symbol id="cflange" viewBox="0 0 20 20"><rect x="1" y="5" width="13" height="10" fill="#eee" stroke="#222"/><path d="M3 10h8" stroke="#d4121a" stroke-width="3"/><path d="M17 3v14" stroke="#d4121a" stroke-width="1.400" stroke-dasharray="2 1"/></symbol>
<symbol id="ibeamg" viewBox="0 0 20 20"><path d="M4 4l8-2 6 2-1 4-5 1-1 6 5 1v2l-8 2-6-3 1-3 4-1 1-6-5-1z" fill="#7e848b" stroke="#555b63" stroke-width=".6"/></symbol>
<symbol id="bino" viewBox="0 0 20 20"><path d="M2 16l4-11 4 2-1 3 3-6 4 2 2 10-4 1-3-6-2 7z" fill="#2f343a"/><path d="M6 5l2 1M13 4l2 1" stroke="#1a8ae6" stroke-width="1.400"/></symbol>
<symbol id="qnew" viewBox="0 0 20 20"><path d="M3 1h8l4 4v14H3z" fill="#fff" stroke="#777"/><path d="M14 9v9M10 14h9" stroke="#2b9a2b" stroke-width="3.400"/></symbol>
<symbol id="qopen" viewBox="0 0 20 20"><path d="M2 5h6l2 2h8v10H2z" fill="#f6cb6a" stroke="#b98522"/><path d="M4 4h12v3H4z" fill="#fff" stroke="#bbb" stroke-width=".6"/><path d="M2 8h16v9H2z" fill="#f3c35a" stroke="#b98522"/></symbol>
<symbol id="qr" viewBox="0 0 20 20"><path d="M2 5h6l2 2h8v10H2z" fill="#f3c35a" stroke="#b98522"/><path d="M4 3h11v4H4z" fill="#fff" stroke="#bbb" stroke-width=".6"/><text x="13" y="18" class="qrt" text-anchor="middle">R</text></symbol>
<symbol id="qsave" viewBox="0 0 20 20"><path d="M1 1h15l3 3v15H1z" fill="#2f343a"/><path d="M4 2h10v6H4z" fill="#e8e8e8"/><path d="M4 11h12v8H4z" fill="#bfc3c8"/><path d="M7 12h3v6H7z" fill="#2f343a"/></symbol>
<symbol id="qx" viewBox="0 0 20 20"><circle cx="10" cy="10" r="8" fill="#fff" stroke="#111" stroke-width="2.400"/><path d="M7 7l6 6M13 7l-6 6" stroke="#111" stroke-width="2.400"/></symbol>
<symbol id="user" viewBox="0 0 20 20"><circle cx="10" cy="6" r="4.400" fill="#1a7fd4"/><path d="M1 19q1-6 6-7l3 2 3-2q5 1 6 7z" fill="#1a7fd4"/></symbol>
<symbol id="smile" viewBox="0 0 20 20"><circle cx="10" cy="10" r="9.500" fill="#f7c61f"/><path d="M7 6v3M13 6v3" stroke="#6b4a16" stroke-width="1.400"/><path d="M5 13q5 4 10 0" fill="none" stroke="#6b4a16" stroke-width="1.200"/></symbol>
<symbol id="app" viewBox="0 0 36 36"><circle cx="18" cy="18" r="17.500" fill="url(#gApp)" stroke="#6c7f90"/><rect x="6" y="6" width="24" height="25" rx="2" fill="#16528f"/><path d="M9 11h9v-3h4v3h5v12h-4v-8h-5v3h-3v3h3v9H9v-9h4v-3H9z" fill="#fff"/></symbol>
<symbol id="gs" viewBox="0 0 60 60"><path d="M8 48L38 28" stroke="#0d6f0d" stroke-width="4"/><path d="M0 34l18 6v20L0 54zM26 20l18 6-10 14-10-10z" fill="#0d6f0d"/></symbol>
<symbol id="gsr" viewBox="0 0 60 60"><path d="M52 48L22 28" stroke="#0d6f0d" stroke-width="4"/><path d="M60 34l-18 6v20l18-6zM34 20l-18 6 10 14 10-10z" fill="#0d6f0d"/></symbol>
</svg>

<div class="app">
  <header class="title">
    <svg class="appbtn"><use href="#app"/></svg>
    <div class="qat">
      <svg class="qi"><use href="#qnew"/></svg>
      <svg class="qi"><use href="#qopen"/></svg>
      <i class="dd qdd"></i>
      <svg class="qi"><use href="#qr"/></svg>
      <svg class="qi"><use href="#qsave"/></svg>
      <svg class="qi"><use href="#qx"/></svg>
    </div>
    <i class="qover"></i>
    <div class="ttext">PIPMALL1A_STR_FINAL_V94_SMALL_Z - Bentley AutoPIPE Advanced</div>
    <div class="winctl">
      <span class="wc-min"></span><span class="wc-max"></span>
      <svg class="wc-x" viewBox="0 0 12 12"><path d="M0 0l12 12M12 0L0 12"/></svg>
    </div>
  </header>

  <div class="shell">
    <nav class="tabs-top">
      <span class="tt">文件</span><span class="tt on">主页</span><span class="tt">视角</span><span class="tt">显示</span><span class="tt">选择</span><span class="tt">插入</span><span class="tt">修改</span><span class="tt">删除</span><span class="tt">荷载</span><span class="tt">分析</span><span class="tt">结果</span><span class="tt">工具</span><span class="tt">支架优化</span><span class="tt bt">Bentley 云服务</span><span class="tt">帮助</span>
      <div class="tright">
        <svg class="bn"><use href="#bino"/></svg><span class="cust">自定义</span><i class="chev"></i>
        <svg class="us"><use href="#user"/></svg><i class="chev"></i>
        <svg class="us"><use href="#smile"/></svg><i class="chev"></i>
      </div>
    </nav>

    <section class="ribbon">
      <div class="grp g217"><div class="gbody">
        <div class="ri w42"><svg class="lg"><use href="#paste"/></svg><span>粘贴</span></div>
        <div class="ri w42"><svg class="lg"><use href="#cut"/></svg><span>剪切</span></div>
        <div class="ri w42"><svg class="lg"><use href="#copy"/></svg><span>复制</span></div>
        <div class="ri w42"><svg class="lg"><use href="#undo"/></svg><span>撤消</span></div>
        <div class="ri w42"><svg class="lg"><use href="#redo"/></svg><span>恢复</span></div>
      </div><div class="glabel">剪贴板</div></div>

      <div class="grp g349"><div class="gbody">
        <div class="ri w42"><svg class="lg"><use href="#lpipe"/></svg><span>管段</span><i class="dd"></i></div>
        <div class="ri w42"><svg class="lg"><use href="#lbend"/></svg><span>弯头</span><i class="dd"></i></div>
        <div class="ri w42"><svg class="lg"><use href="#ltee"/></svg><span>三通</span><i class="dd"></i></div>
        <div class="ri w55"><svg class="lg"><use href="#lred"/></svg><span>异径接头</span><i class="dd"></i></div>
        <div class="ri w105"><svg class="lg"><use href="#lanch"/></svg><span>固定点/节点链接</span><i class="dd"></i></div>
        <div class="smcol">
          <div class="sm"><svg class="si"><use href="#hang"/></svg><span>支架</span><i class="dd"></i></div>
          <div class="sm"><svg class="si"><use href="#curve"/></svg><span>分段</span><i class="dd"></i></div>
          <div class="sm"><svg class="si"><use href="#ibeamg"/></svg><span>梁</span><i class="dd"></i></div>
        </div>
      </div><div class="glabel">建模</div></div>

      <div class="grp g107"><div class="gbody">
        <div class="ri w60"><svg class="lg"><use href="#lprop"/></svg><span>管线特性</span><i class="dd"></i></div>
        <div class="ri w40"><svg class="lg"><use href="#lpt"/></svg><span>工作</span><i class="dd"></i></div>
      </div><div class="glabel">特性</div></div>

      <div class="grp g269"><div class="gbody">
        <div class="ri w56"><svg class="lg"><use href="#laxes"/></svg><span>轴测视角</span><i class="dd"></i></div>
        <div class="ri w46"><svg class="lg"><use href="#lcube"/></svg><span>缺省值</span><i class="dd"></i></div>
        <div class="ri w38"><svg class="lg"><use href="#lcubeb"/></svg><span>视图</span><i class="dd"></i></div>
        <div class="ri w46"><svg class="lg"><use href="#leye"/></svg><span>缩放</span><i class="dd"></i></div>
        <div class="smcol">
          <div class="sm"><svg class="si"><use href="#lens"/></svg><span>模式</span><i class="dd"></i></div>
          <div class="sm"><svg class="si"><use href="#tedit"/></svg><span>输入表格</span></div>
          <div class="sm"><svg class="si"><use href="#slid"/></svg><span>显示选项</span></div>
        </div>
      </div><div class="glabel">视角</div></div>

      <div class="grp g196"><div class="gbody op">
        <div class="smcol c78">
          <div class="sm"><svg class="si"><use href="#gonode"/></svg><span>转至管点</span></div>
          <div class="sm"><svg class="si"><use href="#gonode"/></svg><span>转至梁</span></div>
          <div class="sm"><svg class="si"><use href="#conv"/></svg><span>转换为</span><i class="dd"></i></div>
        </div>
        <div class="smcol c82">
          <div class="sm"><svg class="si"><use href="#move"/></svg><span>移动/拉伸</span></div>
          <div class="sm"><svg class="si"><use href="#rot"/></svg><span>旋转</span></div>
          <div class="sm"><svg class="si"><use href="#scale"/></svg><span>比例</span></div>
        </div>
        <div class="smcol">
          <div class="sm"><svg class="si"><use href="#curve"/></svg><i class="dd"></i></div>
          <div class="sm"><svg class="si"><use href="#cflange"/></svg><i class="dd"></i></div>
          <div class="sm"><svg class="si"><use href="#ibeamg"/></svg><i class="dd"></i></div>
        </div>
      </div><div class="glabel">操作</div></div>

      <div class="grp g133"><div class="gbody">
        <div class="ri w42"><svg class="lg"><use href="#lslid"/></svg><span>常规</span></div>
        <div class="ri w42"><svg class="lg"><use href="#ledit"/></svg><span>编辑</span></div>
        <div class="ri w42"><svg class="lg"><use href="#ldocb"/></svg><span>结果</span></div>
      </div><div class="glabel">模型选项</div></div>

      <div class="grp g121"><div class="gbody tight">
        <div class="ri w58"><svg class="lg"><use href="#lverify"/></svg><span>模型验证</span><i class="dd"></i></div>
        <div class="ri w58"><svg class="lg"><use href="#lchart"/></svg><span>全部分析</span></div>
      </div><div class="glabel">分析</div></div>

      <div class="grp g163"><div class="gbody tight">
        <div class="ri w58"><svg class="lg"><use href="#ldoct"/></svg><span>输入列表</span><i class="dd"></i></div>
        <div class="ri w56"><svg class="lg"><use href="#ldocp"/></svg><span>输出报告</span><i class="dd"></i></div>
        <div class="ri w44"><svg class="lg"><use href="#lxl"/></svg><span class="xl">Excel</span><span class="xl2">报告</span></div>
      </div><div class="glabel">报告</div></div>

      <div class="grp g163"><div class="gbody tight">
        <div class="ri w46"><svg class="lg"><use href="#lcombo"/></svg><span>组合</span></div>
        <div class="ri w51"><svg class="lg"><use href="#lcode"/></svg><span>规范应力</span></div>
        <div class="ri w62"><svg class="lg"><use href="#lgrid"/></svg><span>结果表格</span></div>
      </div><div class="glabel">结果</div></div>
    </section>

    <div class="toolbars">
      <div class="tbrow"><div class="tb" id="tb1"></div></div>
      <div class="tbrow"><div class="tb" id="tb2"></div></div>
      <div class="tbrow"><div class="tb" id="tb3"></div></div>
    </div>

    <main class="main">
      <div class="view">
        <svg class="model" id="model" viewBox="960 240 400 660"></svg>
      </div>
      <div class="vsb"><i class="chv up"></i><b class="thumbv"></b><i class="chv down"></i></div>
      <div class="hsb"><b class="thumbh"></b><i class="chv right"></i></div>
    </main>

    <footer class="status">
      <div class="st-dark"></div>
      <div class="st-cells">
        <span class="sc s78"></span><span class="sc s61">C12 F</span><span class="sc s41">C</span><span class="sc s100">PIPE103</span><span class="sc s-last"><i class="grip"></i></span>
      </div>
    </footer>
  </div>

  <section class="dlg data">
    <div class="dlg-title">
      <svg class="dlg-ic" viewBox="0 0 16 12"><rect x=".5" y=".5" width="15" height="11" fill="#ddd" stroke="#888"/><rect x="2" y="2" width="7" height="8" fill="#3b7a8a"/><rect x="10" y="2" width="4" height="8" fill="#a9c6cf"/></svg>
      <span>检查组件数据</span>
      <div class="dc"><span class="d-min"></span><span class="d-max"></span><svg class="d-x" viewBox="0 0 12 12"><path d="M0 0l12 12M12 0L0 12"/></svg></div>
    </div>
    <div class="gridbox">
      <div class="gridmain">
        <div class="gridscroll">
          <div class="row head" id="ghead"></div>
          <div id="gbody"></div>
        </div>
        <div class="gvsb">
          <b class="sbtn"><i class="tri-u"></i></b>
          <b class="vthumb"></b>
          <b class="sbtn bot"><i class="tri-d"></i></b>
        </div>
      </div>
      <div class="tabstrip">
        <div class="navb"><b><i class="tri-first"></i></b><b><i class="tri-l"></i></b><b><i class="tri-r"></i></b><b><i class="tri-last"></i></b></div>
        <div class="sheets">
          <span class="sheet act">压力/温度/管线 ID</span>
          <span class="sheet">管线特性</span><span class="sheet">分段</span><span class="sheet">管点</span><span class="sheet wide">固定点/节点链接</span><span class="sheet">支架</span><span class="sheet">三通</span><span class="sheet">弯头</span><span class="sheet">阀门</span><span class="sheet">法兰</span><span class="sheet"></span>
        </div>
        <div class="hbar"><b class="hb"><i class="tri-l"></i></b><b class="hthumb"></b><span class="hgap"></span><b class="hb"><i class="tri-r"></i></b></div>
        <div class="corner"></div>
      </div>
    </div>
  </section>

  <section class="dlg search">
    <div class="s-title"><svg class="s-ic"><use href="#bino"/></svg><span>命令搜索实用程序</span>
      <svg class="s-x" viewBox="0 0 12 12"><path d="M0 0l12 12M12 0L0 12"/></svg></div>
    <div class="s-body"><label>搜索：</label><div class="combo"><b class="cb"><i class="tri-d"></i></b></div></div>
  </section>

  <section class="cmd">
    <div class="cmd-title"><b class="cmd-ic"></b></div>
    <div class="cmd-body">
      <span class="cmd-t">右键单击 PAN-ZOOM-ROTATE，单击拖动，双击退</span>
      <button class="btn def">确定</button><button class="btn">取消</button><button class="btn">帮助</button>
    </div>
  </section>
</div>
<script src="script.js"></script>
</body>
</html>
```
FILE: styles.css
```css
*{box-sizing:border-box}
html,body{margin:0;height:100%;background:#fff;overflow:hidden}
body{font-family:"Noto Sans CJK SC","Liberation Sans",sans-serif;font-size:13px;color:#111}
.defs{position:absolute;width:0;height:0;overflow:hidden}
.nd{fill:#fff;stroke:#1a8ae6;stroke-width:1.400}
.nl{fill:#fff;stroke:#1a8ae6;stroke-width:2}
.g{stroke:#6b7179;stroke-width:1.800;fill:none}
.ar{fill:#6fb63f;stroke:#3f7f1f;stroke-width:1}
.svt{font:700 9px "Liberation Sans",sans-serif;fill:#222}
.sn{font:700 12px "Liberation Sans",sans-serif;fill:#2a2e33}
.qrt{font:700 12px "Liberation Serif",serif;fill:#a01414}

.app{position:relative;width:1775px;height:964px;overflow:hidden}
.title{height:28px;border-top:1px solid #a8a8a8;background:#fff;display:flex;align-items:center;padding-left:13px;position:relative}
.appbtn{width:36px;height:36px;position:absolute;left:13px;top:5px;z-index:3}
.qat{position:absolute;left:46px;top:3px;width:140px;height:21px;border:1px solid #c4c8cc;border-radius:0 11px 11px 0;background:linear-gradient(#eceef0,#d9dde0);display:flex;align-items:center;padding-left:15px;gap:4px}
.qi{width:18px;height:18px}
.qdd{margin:0 3px}
.qover{position:absolute;left:194px;top:10px;width:6px;height:6px;border-top:1px solid #555;border-bottom:3px solid #555}
.ttext{position:absolute;left:742px;top:5px;font:12px/18px "Open Sans","Liberation Sans",sans-serif;color:#222;letter-spacing:.24px;white-space:nowrap}
.winctl{margin-left:auto;display:flex;align-items:center;width:122px;height:100%;position:relative;margin-right:5px}
.wc-min{position:absolute;left:-1px;top:13px;width:10px;height:1px;background:#777}
.wc-max{position:absolute;left:45px;top:8px;width:10px;height:11px;border:1px solid #777}
.wc-x{position:absolute;left:91px;top:8px;width:11px;height:11px;stroke:#888;stroke-width:1;fill:none}

.shell{margin:0 8px;display:flex;flex-direction:column;height:928px;background:#535353}
.tabs-top{height:24px;display:flex;align-items:flex-end;padding-left:46px;position:relative;z-index:1;margin-bottom:-1px}
.tt{color:#fff;font-size:13px;line-height:22px;height:23px;padding:0 12px;margin:0 2px;white-space:nowrap}
.tt.on{color:#111;background:linear-gradient(#fbfcfd,#d3d7db);border:1px solid #e8eaec;border-bottom:0;border-radius:3px 3px 0 0;padding:0 11px}
.tt.bt{font-size:11.500px;margin-left:6px;margin-right:4px;padding:0 11px}
.tright{position:absolute;left:1610px;top:0;height:24px;display:flex;align-items:center;color:#fff}
.bn{width:16px;height:16px}
.cust{font-size:13px;margin:0 10px 0 3px;line-height:18px;white-space:nowrap}
.chev{width:5px;height:5px;border-right:1px solid #ddd;border-bottom:1px solid #ddd;transform:rotate(45deg) translateY(-2px);margin:0 6px 0 4px;display:block;flex:none}
.us{width:18px;height:18px;margin-left:2px;flex:none}

.ribbon{height:91px;margin:0 1px;background:#d4d7da;padding:4px 0 0 4px;display:flex;gap:4px;border-radius:3px;box-shadow:0 1px 0 #8a8a8a}
.grp{height:84px;border:1px solid #f4f5f6;border-radius:3px;outline:1px solid #aeb2b6;outline-offset:-2px;display:flex;flex-direction:column;overflow:visible;background:linear-gradient(#b7bbc2 0,#bcc0c6 15%,#c5c9cd 17%,#e5e8ea 100%)}
.g217{width:217px}.g349{width:349px}.g107{width:107px}.g269{width:269px}.g196{width:196px}.g133{width:133px}.g121{width:121px}.g163{width:163px}
.gbody{height:67px;display:flex;padding-left:2px}
.gbody.op{padding-left:4px}
.gbody.tight{padding-left:0}
.glabel{height:16px;background:linear-gradient(#a6a7a8,#b4b7b7);color:#fff;text-align:center;font-size:13px;line-height:15px;margin:0 1px;border-radius:0 0 2px 2px}
.ri{display:flex;flex-direction:column;align-items:center;flex:none;white-space:nowrap;font-size:13px;line-height:16px;color:#111}
.ri span{display:block;margin-top:0}
.lg{width:36px;height:34px;margin-top:2px;margin-bottom:0;flex:none}
.w38{width:38px}.w40{width:40px}.w42{width:42px}.w44{width:44px}.w46{width:46px}.w51{width:51px}.w55{width:55px}.w56{width:56px}.w58{width:58px}.w60{width:60px}.w62{width:62px}.w105{width:105px}
.dd{display:block;width:0;height:0;border:3px solid transparent;border-top:4px solid #555;border-bottom:0;margin-top:5px}
.ri .xl{font:11px/12px "Open Sans","Liberation Sans",sans-serif;margin-top:3px}
.ri .xl2{line-height:13px}
.smcol{display:flex;flex-direction:column;flex:none;margin-top:-1px}
.c78{width:78px}.c82{width:82px}
.sm{height:22px;display:flex;align-items:center;white-space:nowrap;font-size:13px;gap:3px}
.sm .dd{margin:0 0 0 3px}
.si{width:17px;height:17px;flex:none}

.toolbars{height:80px;display:flex;flex-direction:column;gap:1px;padding-top:2px}
.tbrow{height:25px;display:flex}
.tb{height:25px;display:flex;align-items:center;gap:4px;padding:0 5px 0 13px;background:linear-gradient(#c6cad0,#989da5);border-radius:0 4px 4px 0;position:relative;margin-right:10px}
.tb::before{content:"";position:absolute;left:4px;top:5px;width:2px;height:15px;background:repeating-linear-gradient(#222 0 2px,transparent 2px 4px)}
.tb::after{content:"";position:absolute;right:-10px;top:0;width:10px;height:25px;background:linear-gradient(#74777c,#5c5f63);border-radius:0 3px 3px 0;border-bottom:0}
.tbi{width:18px;height:18px;flex:none}
.ext{position:absolute;right:-8px;bottom:4px;width:6px;height:5px;border-top:1px solid #fff;border-right:2px solid #fff;z-index:1}

.main{height:710px;background:#f0f0f0;display:grid;grid-template-columns:1fr 18px;grid-template-rows:692px 18px;padding-left:2px;position:relative}
.view{border:2px solid #ff0;border-left-color:#f3f300;background:#fff;position:relative;overflow:hidden}
.model{position:absolute;left:948px;top:16px;width:400px;height:660px}
.model text{font:31px "Liberation Sans",sans-serif;fill:#111}
.vsb{position:relative;display:flex;flex-direction:column;align-items:center;justify-content:space-between;padding:8px 0 7px}
.thumbv{position:absolute;left:1px;top:331px;width:16px;height:16px;background:#d0d0d0}
.hsb{position:relative;display:flex;align-items:center;justify-content:flex-end;padding-right:7px}
.thumbh{position:absolute;left:16px;top:2px;width:17px;height:14px;background:#d4d4d4}
.chv{display:block;width:6px;height:6px;border-top:2px solid #555;border-left:2px solid #555}
.chv.up{transform:rotate(45deg)}
.chv.down{transform:rotate(225deg)}
.chv.right{transform:rotate(135deg)}

.status{height:24px;display:flex;background:#2f2f2f;box-shadow:0 0 2px #999}
.st-dark{width:1360px;background:linear-gradient(#3f424b 0,#3f424b 33%,#2f2f2f 34%,#2f2f2f 100%)}
.st-cells{flex:1;display:flex;background:linear-gradient(#a2a2a2,#70767c);border-left:2px solid #111;color:#f4f4f4;font:11.500px/22px "Open Sans","Liberation Sans",sans-serif}
.sc{height:20px;margin-top:2px;border-right:1px solid #3a3a3a;padding-left:10px;line-height:20px;flex:none;white-space:nowrap}
.s78{width:76px}.s61{width:61px}.s41{width:41px}.s100{width:100px}
.s-last{flex:1;border-right:0;position:relative}
.grip{position:absolute;right:2px;bottom:-1px;width:12px;height:10px;background:radial-gradient(#333 35%,transparent 40%) 0 0/3px 3px}

.dlg{position:absolute;background:#f0f0f0}
.data{left:13px;top:239px;width:914px;height:663px;border:1px solid #777;box-shadow:5px 5px 14px rgba(0,0,0,.25)}
.dlg-title{height:30px;background:#fff;display:flex;align-items:center;padding:0 0 4px 8px;font-size:12px;position:relative;color:#222}
.dlg-ic{width:15px;height:12px;margin-right:7px}
.dc{position:absolute;inset:0 auto auto 792px;height:30px;width:110px}
.d-min{position:absolute;left:3px;top:14px;width:11px;height:1px;background:#111}
.d-max{position:absolute;left:47px;top:9px;width:10px;height:10px;border:1px solid #c4c4c4}
.d-x{position:absolute;left:93px;top:9px;width:11px;height:11px;stroke:#222;stroke-width:1.100;fill:none}
.gridbox{position:absolute;left:11px;top:40px;width:894px;height:615px;border:2px solid #6e6e6e;border-bottom-color:#8a8a8a;border-right-color:#8a8a8a;background:#f0f0f0;display:flex;flex-direction:column}
.gridmain{height:596px;display:flex;overflow:hidden;flex:none}
.gridscroll{width:876px;overflow:hidden;flex:none}
.row{display:grid;grid-template-columns:22px 31px 46px 68px 63px 76px 44px 44px 44px 58px 44px 84px 44px 84px 44px 80px;height:16px;font:11px/15px "Liberation Sans",sans-serif;color:#111}
.row .c{border-right:1px solid #7f7f7f;border-bottom:1px solid #7f7f7f;padding:0 3px;overflow:hidden;white-space:nowrap;background:#fff}
.row .ro{background:#c0c0c0}
.row .t{letter-spacing:-.4px;padding:0 0 0 3px}
.row .num{text-align:right}
.row .p{letter-spacing:-.6px}
.row .rh{background:#f0f0f0;border-right:2px solid #222;border-bottom:1px solid #222;box-shadow:inset 1px 1px #fff;display:flex;align-items:center;justify-content:center;padding:0}
.row .ck{display:flex;align-items:center;justify-content:center;padding:0}
.arrowr{width:0;height:0;border:5px solid transparent;border-left:7px solid #000;border-right:0}
.cbx{width:12px;height:12px;background:#fff;border:2px solid #6f6f6f;border-right:1px solid #eee;border-bottom:1px solid #eee;position:relative;display:block}
.cbx svg{position:absolute;left:0;top:0;width:10px;height:10px;stroke:#000;stroke-width:2;fill:none}
.row.head{height:58px;font:700 13px/14px "Liberation Sans","Noto Sans CJK SC",sans-serif}
.row.head .h{background:#f0f0f0;border-right:2px solid #222;border-bottom:2px solid #222;box-shadow:inset 1px 1px #fff;display:flex;flex-direction:column;align-items:center;justify-content:center;text-align:center;white-space:nowrap;overflow:hidden;padding:0}
.row.head small{font:700 11px/13px "Liberation Sans",sans-serif;color:#222}
.row.head small.n{font-size:10px;line-height:14px}
.row.head .h.top{justify-content:flex-start;padding-top:7px}
.row.head .h.mid{padding-bottom:3px}
.gvsb{flex:1;display:flex;flex-direction:column;background:repeating-conic-gradient(#f4f4f4 0 25%,#fff 0 50%) 0 0/2px 2px;position:relative}
.sbtn{height:16px;background:#f0f0f0;border:1px solid;border-color:#fff #666 #666 #fff;display:flex;align-items:center;justify-content:center;flex:none}
.vthumb{position:absolute;left:0;top:132px;width:16px;height:82px;background:#f0f0f0;border:1px solid;border-color:#fff #aaa #aaa #fff}
.sbtn.bot{margin-top:auto}
.tri-u{border:4px solid transparent;border-bottom:4px solid #000;border-top:0;display:block}
.tri-d{border:4px solid transparent;border-top:4px solid #000;border-bottom:0;display:block}
.tri-l{border:4px solid transparent;border-right:5px solid #000;border-left:0;display:block}
.tri-r{border:4px solid transparent;border-left:5px solid #000;border-right:0;display:block}
.tri-first{border:4px solid transparent;border-right:5px solid #777;border-left:0;display:block;box-shadow:-2px 0 0 0 #777}
.tri-last{border:4px solid transparent;border-left:5px solid #000;border-right:0;display:block;box-shadow:2px 0 0 0 #000}
.tabstrip{height:17px;display:flex;border-top:1px solid #000;background:#f0f0f0;flex:none;overflow:hidden;position:relative}
.navb{display:flex;flex:none;width:68px;border-bottom:2px solid #555}
.navb b{width:17px;height:15px;background:#f0f0f0;border:1px solid;border-color:#fff #555 #555 #fff;display:flex;align-items:center;justify-content:center}
.sheets{display:flex;flex:none;width:708px;overflow:hidden;gap:18px;padding-left:11px;white-space:nowrap;font-size:14.500px;line-height:12px;color:#222;letter-spacing:0}
.sheet{position:relative;flex:none;height:16px}
.sheet::before{content:"";position:absolute;left:-12px;top:0;width:1px;height:16px;background:#000;transform:skewX(-18deg)}
.sheet::after{content:"";position:absolute;left:-8px;top:0;width:2px;height:16px;background:#000;transform:skewX(18deg)}
.sheet.act{font-weight:700;color:#000;letter-spacing:2px;background:#fff;width:139px;margin-left:0}
.sheet.act::before{display:none}
.sheet.wide{letter-spacing:.9px}
.hbar{display:flex;flex:none;width:100px;height:15px}
.hb{width:17px;height:15px;background:#f0f0f0;border:1px solid;border-color:#fff #555 #555 #fff;display:flex;align-items:center;justify-content:center}
.hthumb{width:61px;height:15px;background:#f0f0f0;border:1px solid;border-color:#fff #888 #888 #fff}
.hgap{width:5px;background:#fff}
.corner{flex:1;background:#f0f0f0}

.search{left:1264px;top:232px;width:434px;height:66px;border:1px solid #bbb;box-shadow:2px 2px 5px rgba(0,0,0,.25)}
.s-title{height:29px;background:#fff;display:flex;align-items:center;padding:0 0 4px 9px;font-size:12px;color:#9a9a9a;position:relative}
.s-ic{width:16px;height:16px;margin-right:5px}
.s-x{position:absolute;right:10px;top:9px;width:11px;height:11px;stroke:#999;stroke-width:1;fill:none}
.s-body{height:35px;display:flex;align-items:center;padding-left:6px;font-size:12px;color:#111}
.s-body label{width:42px;flex:none;margin-top:-4px}
.combo{width:376px;height:23px;background:#fff;border:1px solid;border-color:#666 #ddd #ddd #666;box-shadow:inset 1px 1px #aaa;position:relative}
.cb{position:absolute;right:0;top:0;width:17px;height:21px;background:#f0f0f0;border:1px solid;border-color:#fff #555 #555 #fff;display:flex;align-items:center;justify-content:center}

.cmd{position:absolute;left:4px;top:922px;width:432px;height:42px;background:#f0f0f0;border:1px solid #888;z-index:5}
.cmd-title{height:12px;background:#bac9d9;border-bottom:1px solid #888}
.cmd-ic{display:block;width:12px;height:11px;background:#d8d8d8;border-right:1px solid #888;position:relative}
.cmd-ic::after{content:"";position:absolute;left:2px;top:3px;width:7px;height:3px;background:#fff;border:1px solid #000}
.cmd-body{display:flex;align-items:center;height:28px;padding:0 0 6px 3px}
.cmd-t{width:277px;flex:none;font-size:12px;white-space:nowrap;color:#111;letter-spacing:-.05px}
.btn{font:13px/16px "Noto Sans CJK SC",sans-serif;width:36px;height:18px;padding:0;margin:0 10px 0 0;background:#f0f0f0;color:#111;border:1px solid;border-color:#fff #555 #555 #fff;box-shadow:1px 1px 0 #999}
.btn.def{border:2px solid #555;border-color:#666 #333 #333 #666}
```
FILE: script.js
```js
function use(id,c){return '<svg class="'+c+'"><use href="#'+id+'"/></svg>';}
var rows=[
 ['hang','spring','rod','tri','comb','gt','gx','pcurve','dd','diag'],
 ['zin','zout','zprev','hand','eye','al','ar','au','ad','lens','wire','cone','w1','w2','w4','gem','gem','gem','gem','c1','c2','c3','c1','slid','slidp','info','therm','gauge','wt','force','dial','rb','valve','fl','tee','rule','mach','joint','plant','chain','rule'],
 ['pipe','bend','tee','redu','valve','flex','fl','wave','cross','anch','hang','info','pt','force','dial','wt','wta','curve','plant','joint','torch','dist','drop','mach','mach2','ibeam','spk']
];
rows.forEach(function(r,i){
  document.getElementById('tb'+(i+1)).innerHTML=r.map(function(x){return use(x,'tbi');}).join('')+'<i class="ext"></i>';
});

/* grid */
var H=[['h',''],['h','从'],['h','到'],['h','材料'],['h','管线 <small>ID</small>'],
 ['m','公称直径','in'],['t','压力','psi'],['t','温度','deg F'],['t','自动',''],['t','膨胀系数','in/100ft'],['t','自动',''],
 ['t','热态弹性模量','E6 psi'],['t','自动',''],['t','热态许用应力','psi'],['t','自动',''],['t','屈服强度 <small>(SY)</small>','psi']];
document.getElementById('ghead').innerHTML=H.map(function(h){
  if(h[0]=='h')return '<div class="h mid"><span>'+h[1]+'</span></div>';
  if(h[0]=='m')return '<div class="h top"><span>&nbsp;</span><span>'+h[1]+'</span><small>'+h[2]+'</small></div>';
  return '<div class="h top"><span>工况 <small class="n">1</small></span><span>'+h[1]+'</span>'+(h[2]?'<small>'+h[2]+'</small>':'')+'</div>';
}).join('');
var D=[['C08','C09 N'],['C09','C09 F'],['C09 F','C10'],['C10','C11 N'],['C11','C11 F'],['C11 F','C12 N'],['C12','C12 F'],['C12 F','C13'],['C13','C14'],['C14','C15'],['C15',''],
['D00','D01 N'],['D01','D01 F'],['D01 F','D02 N'],['D02','D02 F'],['D02 F','D03 N'],['D03','D03 F'],['D03 F','D04 N'],['D04','D04 F'],['D04 F','D05'],['D05','D06'],['D06','D07 N'],['D07','D07 F'],['D07 F','D08 N'],['D08','D08 F'],['D08 F','D09'],['D09','D10'],['D10','D11'],['D11','D12 N'],['D12','D12 F'],['D12 F','D13 N'],['D13','D13 F'],['D13 F','D14'],['D14','D15']];
var ck='<div class="c ck"><span class="cbx"><svg viewBox="0 0 10 10"><path d="M1.500 4.500l2.500 3L8.500 1.500"/></svg></span></div>';
function c(cl,t){return '<div class="c '+cl+'">'+t+'</div>';}
document.getElementById('gbody').innerHTML=D.map(function(d,i){
  var pipe=i<11?'PIPE103':'PIPE101',dn=i<11?'4.000':'6.000';
  return '<div class="row"><div class="c rh">'+(i==7?'<i class="arrowr"></i>':'')+'</div>'+
   c('ro t',d[0])+c('ro',d[1])+c('ro','A106-B')+c('p',pipe)+c('ro num',dn)+c('num','200.00')+c('num','400.00')+ck+
   c('ro num','2.714')+ck+c('ro num','27.7000')+ck+c('ro num','20000.00')+ck+c('ro num','29900.00')+'</div>';
}).join('');

/* 3D model: coordinates read at 3x from the reference */
var s='';
function ln(a,col,w){s+='<path d="'+a+'" stroke="'+col+'" stroke-width="'+w+'" fill="none"/>';}
function beam(a){ln(a,'#b5642a',8);ln(a,'#f5923c',5);}
function col(a,d){ln(a,d?'#3a2410':'#c07a30',10);ln(a,d?'#5a3414':'#ffb45a',6);}
function txt(t,x,y,n,dx,dy){n=n||1;for(var i=0;i<n;i++)s+='<text x="'+(x+i*(dx||5))+'" y="'+(y+(i%2)*(dy||3))+'">'+t+'</text>';}
function node(x,y){s+='<rect x="'+(x-5)+'" y="'+(y-5)+'" width="10" height="10" fill="#0e3f8a"/>';}

/* upper cluster (1160,260) */
s+='<g transform="translate(1160 260) scale(.3333)">';
ln('M122 150V900','#8a8a8a',4);ln('M146 75V900','#444',4);
[[44,70],[20,140],[20,212],[44,600],[20,650],[20,725]].forEach(function(p){s+='<use href="#gs" x="'+p[0]+'" y="'+(p[1]-10)+'" width="74" height="74"/>';});
[[155,70],[155,140],[130,212],[155,600],[155,675],[130,725]].forEach(function(p){s+='<use href="#gsr" x="'+p[0]+'" y="'+(p[1]-10)+'" width="74" height="74"/>';});
s+='<rect x="127" y="580" width="44" height="70" rx="6" fill="url(#gCyl)"/><rect x="96" y="630" width="54" height="75" rx="6" fill="url(#gCyl)"/>';
s+='<path d="M128 570l14-6 8 10 14-4 4 12-40 2zM98 620l14-10 10 10 16-4 6 14-46 2z" fill="#0d6f0d"/>';
[[148,78],[157,100],[160,112],[122,150],[130,143],[148,130],[122,198],[148,663],[122,712]].forEach(function(p){node(p[0],p[1]);});
txt('C02',147,70);txt('C01',158,95);txt('C06',165,108,2);txt('5001',160,133,3);txt('F02',120,142);txt('F12',128,202);txt('C03',155,668);txt('D3',145,716);
s+='</g>';

/* frame (960,560) */
s+='<g transform="translate(960 560) scale(.3333)">';
col('M60 578V760');col('M200 660V840',1);col('M388 548V735',1);col('M478 575V778');col('M605 650V852',1);col('M718 710V915');col('M815 655V858');
col('M575 520V720');col('M945 230V400');col('M805 150V240');col('M760 340V520');col('M620 258V340');col('M435 365V450');col('M245 470V550');col('M705 595V700');col('M575 440V520');
beam('M805 150L60 578');beam('M805 150L945 230');beam('M945 230L200 660');beam('M620 258L760 340');beam('M435 365L575 445');beam('M245 470L390 550');beam('M60 578L200 660');
beam('M815 655L715 710');beam('M705 595L605 650');beam('M575 520L480 575');beam('M480 575L715 710');beam('M575 520L815 655');
ln('M720 0V120L688 145V240','#8a8a8a',4);ln('M745 0V350','#6a6a6a',4);ln('M720 340V560','#8a8a8a',5);ln('M775 540V650','#8a8a8a',4);
ln('M630 285L700 330','#777',5);ln('M745 330L1065 495V680','#8a8a8a',5);ln('M205 520V620','#777',3);ln('M205 520L280 560','#777',4);ln('M480 470L700 595','#8a8a8a',5);ln('M480 575L715 710','#666',3);
ln('M680 325L150 630','#777',2);s+='<path d="M690 335L165 630" stroke="#fff" stroke-width="1.500" stroke-dasharray="4 3"/>';
ln('M400 445H460V505H400Z','#222',2);
ln('M695 720V800L755 805V740Z','#0e3f8a',6);ln('M695 790H755','#888',5);
/* green supports */
s+='<path d="M585 195L665 215M600 185l10 20M615 190l10 20M630 195l10 20M645 200l10 20" stroke="#2fd52f" stroke-width="3" fill="none"/>';
s+='<path d="M700 270h45v85h-45zM672 250h25v20h-25zM670 290h25v20h-25zM672 332h25v16h-25zM795 250h25v22h-25zM795 320h25v18h-25zM745 340l20 12-20 4z" fill="#0d6f0d"/>';
s+='<path d="M700 250l80 30M720 255l40 15" stroke="#2fd52f" stroke-width="3" stroke-dasharray="6 3"/>';
s+='<rect x="870" y="445" width="30" height="40" fill="url(#gCyl)"/><path d="M885 420v25M885 478l35 0-30 18-40-6z" stroke="#0d6f0d" stroke-width="3" fill="#0d6f0d"/>';
ln('M215 490V520','#2fd52f',4);
/* nodes */
[[722,60],[722,118],[688,148],[805,150],[945,230],[620,258],[630,285],[435,365],[525,413],[568,440],[245,470],[212,490],[60,578],[200,660],[388,548],[480,575],[575,520],[605,650],[705,595],[815,655],[718,712],[760,340],[886,405],[1036,490],[1065,500],[1065,640],[1065,660],[1065,676],[466,618],[775,540],[720,560],[340,525],[300,575],[160,630],[130,650],[480,500],[435,480],[695,720],[755,805],[755,755]].forEach(function(p){node(p[0],p[1]);});
[[60,760],[200,842],[388,735],[478,778],[575,722],[605,852],[718,915],[815,858],[945,400],[760,520]].forEach(function(p){s+='<circle cx="'+p[0]+'" cy="'+p[1]+'" r="6" fill="#9fd8ea"/>';});
/* labels */
[['F04',730,62,3,2],['F08',728,124],['F09',684,143],['M30',875,185],['5065',945,232,5],['5062',805,147,6],['M1',815,242],['M32',533,317],['M47',870,285],['M22',952,316],['5043',955,407],['D05',888,398],['M5',767,431],['M28',348,425],['M49',482,386],['M12',692,387],['C09',755,355,3],['5001',800,335,5],['D03',1075,489],['D04',1035,497,2],['D02',1068,650],['D00',1068,672],['D01',1068,688],
['M90',68,675],['M3',208,752],['M2',395,647],['5017',70,767],['5005',210,845],['5003',395,740],['5037',485,782],['5031',585,729],['M20',612,755],['5039',615,857],['5041',727,923],['5035',825,866],['M18',822,761],['M19',485,680],['M37',640,550],['M40',535,555],['M38',542,607],['M42',660,628],['M36',760,620],['M41',775,693],['M43',710,683],['M24',145,538],['M25',115,602],['M26',300,493],['5055',60,577,6],['5066',245,470,6],['M34',440,530,2],['M01',720,560],['M80',735,583,2],['5077',815,658,7],['5002',770,525,5],['V09',472,622,2],['M17',578,630,2],['5032',580,520,7],['M13',560,470],['M15',270,655],['M49',530,412,8],['5011',575,445,9],['5021',440,370,5],['5011',625,258,6],['5021',700,215,10,5,6],['5031',695,240,12,6,7],['5001',495,575,6],['5029',345,520,10],['5023',390,548,5],['5011',160,630,12],['5007',200,655,8],['5013',620,652,7],['5019',705,590,7],['5051',715,710,8],['5009',730,750,7,5,7],['5033',745,780,6,5,7],['D12',300,575,4],['D48',205,505],['M1N2',725,815,2],['5051',480,500,4],['L81',440,460,5]].forEach(function(l){txt(l[0],l[1],l[2],l[3],l[4],l[5]);});
s+='</g>';
document.getElementById('model').innerHTML=s;
```
